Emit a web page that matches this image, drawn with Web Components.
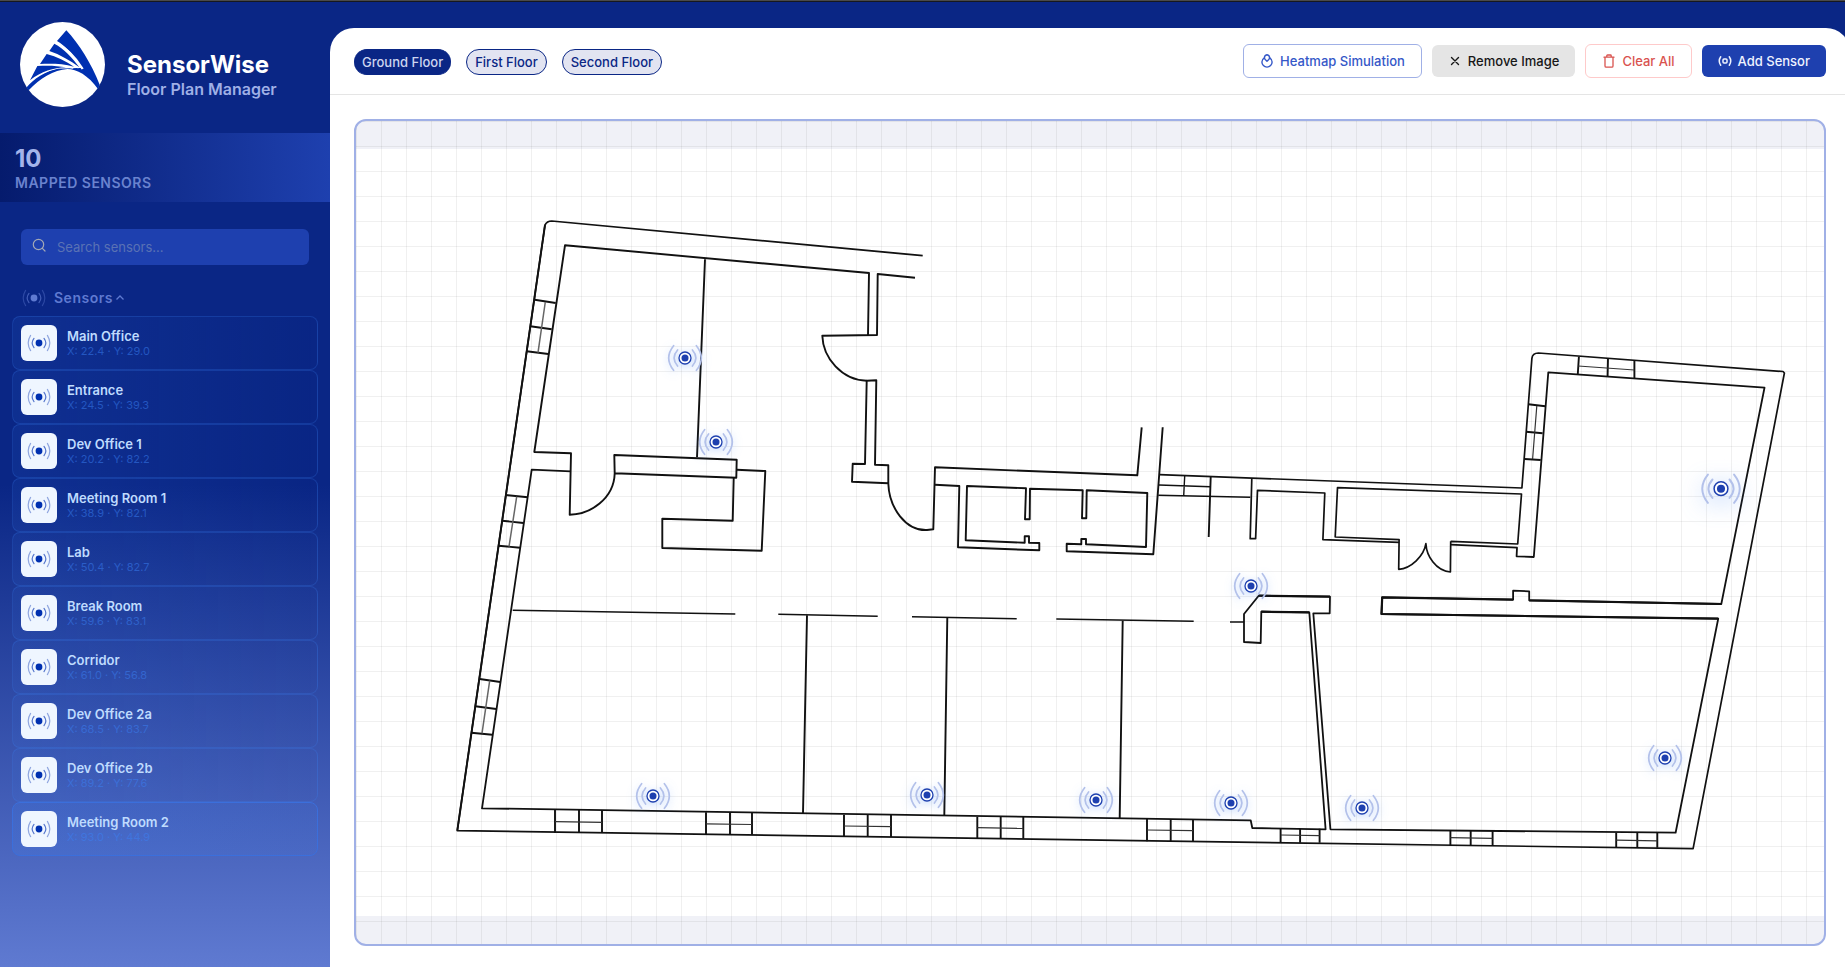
<!DOCTYPE html>
<html lang="en">
<head>
<meta charset="utf-8">
<meta name="viewport" content="width=device-width, initial-scale=1">
<title>SensorWise</title>
<style>
html, body { height: 100%; margin: 0; }
body { font-family: Inter, "Liberation Sans", sans-serif; background: #0a2685; overflow: hidden; }
</style>
</head>
<body>
<sw-app>
  <sw-sidebar slot="side">
    <sw-sensor name="Main Office" x="22.4" y="29.0"></sw-sensor>
    <sw-sensor name="Entrance" x="24.5" y="39.3"></sw-sensor>
    <sw-sensor name="Dev Office 1" x="20.2" y="82.2"></sw-sensor>
    <sw-sensor name="Meeting Room 1" x="38.9" y="82.1"></sw-sensor>
    <sw-sensor name="Lab" x="50.4" y="82.7"></sw-sensor>
    <sw-sensor name="Break Room" x="59.6" y="83.1"></sw-sensor>
    <sw-sensor name="Corridor" x="61.0" y="56.8"></sw-sensor>
    <sw-sensor name="Dev Office 2a" x="68.5" y="83.7"></sw-sensor>
    <sw-sensor name="Dev Office 2b" x="89.2" y="77.6"></sw-sensor>
    <sw-sensor name="Meeting Room 2" x="93.0" y="44.9" active></sw-sensor>
  </sw-sidebar>
  <sw-toolbar>
    <sw-pill slot="floors" active>Ground Floor</sw-pill>
    <sw-pill slot="floors">First Floor</sw-pill>
    <sw-pill slot="floors">Second Floor</sw-pill>
    <sw-button kind="outline">
      <svg slot="icon" width="14" height="14" viewBox="0 0 14 14" fill="none" stroke="currentColor" stroke-width="1.4" stroke-linecap="round" stroke-linejoin="round"><path d="M4.400 3.900C2.900 4.800 1.900 6.300 1.900 8A5.100 5.100 0 0 0 12.100 8C12.100 6.300 11.100 4.800 9.600 3.900"/><path d="M7 .8C5.500 1.200 4.400 2.200 4.400 3.800C4.400 5.400 5.700 6.200 7 7.200C8.300 6.200 9.600 5.400 9.600 3.800C9.600 2.200 8.500 1.200 7 .8Z"/></svg>
      Heatmap Simulation</sw-button>
    <sw-button kind="grey">
      <svg slot="icon" width="14" height="14" viewBox="0 0 14 14" fill="none" stroke="currentColor" stroke-width="1.4" stroke-linecap="round"><path d="M3.500 3.500L10.500 10.500M10.500 3.500L3.500 10.500"/></svg>
      Remove Image</sw-button>
    <sw-button kind="danger">
      <svg slot="icon" width="14" height="14" viewBox="0 0 14 14" fill="none" stroke="currentColor" stroke-width="1.3" stroke-linecap="round" stroke-linejoin="round"><path d="M2 3.200H12M4.800 3V1.700Q4.800 1 5.500 1H8.500Q9.200 1 9.200 1.700V3M3 3.400V12Q3 13.200 4.200 13.200H9.800Q11 13.200 11 12V3.400"/></svg>
      Clear All</sw-button>
    <sw-button kind="primary">
      <svg slot="icon" width="14" height="14" viewBox="0 0 14 14" fill="none" stroke="currentColor" stroke-width="1.500" stroke-linecap="round"><rect x="5" y="5" width="4" height="4" rx="1"/><path d="M2.700 2.800Q-.2 7 2.700 11.200M11.300 2.800Q14.200 7 11.300 11.200"/></svg>
      Add Sensor</sw-button>
  </sw-toolbar>
  <sw-floorplan>
    <sw-pin name="Main Office" x="22.4" y="29.0"></sw-pin>
    <sw-pin name="Entrance" x="24.5" y="39.3"></sw-pin>
    <sw-pin name="Dev Office 1" x="20.2" y="82.2"></sw-pin>
    <sw-pin name="Meeting Room 1" x="38.9" y="82.1"></sw-pin>
    <sw-pin name="Lab" x="50.4" y="82.7"></sw-pin>
    <sw-pin name="Break Room" x="59.6" y="83.1"></sw-pin>
    <sw-pin name="Corridor" x="61.0" y="56.8"></sw-pin>
    <sw-pin name="Dev Office 2a" x="68.5" y="83.7"></sw-pin>
    <sw-pin name="Dev Office 2b" x="89.2" y="77.6"></sw-pin>
    <sw-pin name="Meeting Room 2" x="93.0" y="44.9" active></sw-pin>
  </sw-floorplan>
</sw-app>

<script>
const signal = (dot) => `
  <svg width="24" height="24" viewBox="0 0 24 24" fill="none" stroke="${dot}" stroke-width="1.2" stroke-linecap="round" aria-hidden="true">
    <circle cx="12" cy="12" r="3.400" fill="${dot}" stroke="none"/>
    <path opacity=".65" d="M7 7.400Q3.300 12 7 16.600M17 7.400Q20.700 12 17 16.600"/>
    <path opacity=".4" d="M3.600 4.400Q-1.200 12 3.600 19.600M20.400 4.400Q25.200 12 20.400 19.600"/>
  </svg>`;

function define(name, render) {
  customElements.define(name, class extends HTMLElement {
    constructor() {
      super();
      this.attachShadow({ mode: "open" });
    }
    connectedCallback() {
      const t = document.createElement("template");
      t.innerHTML = render(this);
      this.shadowRoot.replaceChildren(t.content.cloneNode(true));
    }
  });
}

define("sw-app", () => `
  <style>
    :host { display: flex; flex-direction: column; height: 100vh; background: #0a2685; }
    .edge { height: 1px; flex: none; background: #4a4a4a; border-bottom: 1px solid #16181f; }
    .body { flex: 1; min-height: 0; display: grid; grid-template-columns: 330px minmax(0, 1fr); }
    main { margin: 26px -5px 0 0; background: #fff; border-radius: 24px 24px 0 0; display: flex; flex-direction: column; min-height: 0; }
  </style>
  <div class="edge"></div>
  <div class="body">
    <slot name="side"></slot>
    <main><slot></slot></main>
  </div>`);

define("sw-sidebar", () => `
  <style>
    :host { display: flex; flex-direction: column; min-height: 0; background: linear-gradient(180deg, #0a2685 50%, #5f7ad1 100%); }
    header { display: flex; align-items: center; gap: 22px; padding: 20px 20px 26px; }
    .brand { padding-top: 20px; }
    h1, p { margin: 0; }
    h1 { font-size: 24px; line-height: 28px; font-weight: 700; color: #fff; }
    .sub { font-size: 16px; line-height: 20px; font-weight: 600; color: #9fb0e6; }
    .stats { padding: 11px 15px 10px; background: linear-gradient(90deg, #051b6d, #1e40af); }
    .count { font-size: 24px; line-height: 29px; font-weight: 700; color: #a3b4ea; }
    .label { font-size: 14px; line-height: 19px; font-weight: 600; letter-spacing: 0.5px; color: #6a83cf; }
    .search { margin: 27px 21px 0; height: 36px; display: flex; align-items: center; gap: 11px; padding: 0 11px; box-sizing: border-box; background: #1e40af; border-radius: 6px; }
    .search svg { flex: none; margin-bottom: 4px; }
    input { flex: 1; min-width: 0; border: 0; padding: 0; background: none; outline: 0; font: 400 13px/20px Inter, sans-serif; color: #dbe4ff; }
    input::placeholder { color: #5a72b4; opacity: 1; }
    .group { margin: 21px 22px 6px; display: flex; align-items: center; border: 0; padding: 0; background: none; font: 600 14px/24px Inter, sans-serif; letter-spacing: 0.5px; color: #5f7ad1; }
    .group span { margin: 0 2px 0 8px; }
    .list { padding: 0 12px; }
  </style>
  <header>
    <svg width="85" height="85" viewBox="0 0 255 255" role="img" aria-label="SensorWise logo">
      <circle cx="127.500" cy="127.500" r="127.500" fill="#fff"/>
      <g fill="#0030b0">
        <path d="M139 25C177 65 214 125 239 188L234 201C205 160 170 141 142 141C101 144 60 168 26 205L19 197C40 170 76 149 108 140L172 138C190 140 185 133 178 129C160 95 133 70 111 57Z"/>
      </g>
      <g fill="none" stroke="#fff">
        <path d="M104 61C140 78 165 104 188 141" stroke-width="7"/>
        <path d="M80 88C120 100 148 115 176 137" stroke-width="6"/>
        <path d="M56 128C95 127 125 127 160 138" stroke-width="5"/>
        <path d="M28 178C55 155 84 144 113 138" stroke-width="4"/>
      </g>
      <g fill="#0030b0">
        <path d="M103 65C132 80 158 108 178 136C150 115 120 98 88 87Z"/>
        <path d="M80 96C110 104 138 118 162 134C130 125 95 125 60 126Z"/>
        <path d="M52 132C85 130 110 131 138 136C100 137 65 148 30 175Z"/>
      </g>
    </svg>
    <div class="brand"><h1>SensorWise</h1><p class="sub">Floor Plan Manager</p></div>
  </header>
  <section class="stats"><p class="count">10</p><p class="label">MAPPED SENSORS</p></section>
  <label class="search">
    <svg width="14" height="14" viewBox="0 0 14 14" fill="none" stroke="#a3a8b5" stroke-width="1.200" stroke-linecap="round" aria-hidden="true"><circle cx="6.500" cy="6.500" r="5.200"/><path d="M10.400 10.400L13 13"/></svg>
    <input type="search" placeholder="Search sensors..." aria-label="Search sensors">
  </label>
  <button class="group" type="button">${signal("#5f7ad1")}<span>Sensors</span>
    <svg width="10" height="10" viewBox="0 0 10 10" fill="none" stroke="currentColor" stroke-width="1.300" aria-hidden="true"><path d="M1.500 6.500L5 3L8.500 6.500"/></svg>
  </button>
  <div class="list"><slot></slot></div>`);

define("sw-sensor", (el) => `
  <style>
    :host { display: flex; align-items: center; gap: 10px; height: 54px; padding: 0 8px; box-sizing: border-box; border: 1px solid rgba(59, 130, 246, .22); border-radius: 8px; background: linear-gradient(90deg, rgba(59, 130, 246, .1), rgba(59, 130, 246, 0)); }
    :host([active]) { border-color: #3b6fdc; background: linear-gradient(90deg, rgba(59, 130, 246, .2), rgba(59, 130, 246, .08)); }
    .tile { width: 36px; height: 36px; display: grid; place-items: center; border-radius: 6px; background: #eff6ff; }
    .name { font-size: 13px; line-height: 16px; font-weight: 600; color: #bfdbfe; }
    .at { font-size: 11px; line-height: 15px; color: rgba(59, 130, 246, .5); }
  </style>
  <div class="tile">${signal("#0030b0")}</div>
  <div><div class="name">${el.getAttribute("name")}</div><div class="at">X: ${el.getAttribute("x")} · Y: ${el.getAttribute("y")}</div></div>`);

define("sw-toolbar", () => `
  <style>
    :host { display: flex; align-items: center; justify-content: space-between; height: 66px; padding: 0 24px; border-bottom: 1px solid #e5e5e5; flex: none; }
    .floors { display: flex; gap: 15px; padding-top: 2px; }
    .actions { display: flex; align-items: center; gap: 10px; }
  </style>
  <nav class="floors"><slot name="floors"></slot></nav>
  <div class="actions"><slot></slot></div>`);

define("sw-pill", () => `
  <style>
    :host { display: block; }
    button { display: block; height: 26px; padding: 0 8px; border: 1px solid #0a2685; border-radius: 13px; background: #e2e4f1; color: #0a2685; font: 500 13px/24px Inter, sans-serif; white-space: nowrap; }
    :host([active]) button { border-width: 1px 0; background: #0a2685; color: #cdd5ef; }
  </style>
  <button type="button"><slot></slot></button>`);

define("sw-button", () => `
  <style>
    :host { display: block; }
    button { display: flex; align-items: center; gap: 6px; padding: 0 16px; border: 0; border-radius: 6px; font: 500 13px/32px Inter, sans-serif; white-space: nowrap; }
    :host([kind=outline]) button { border: 1px solid #a0b0e6; background: #fff; color: #3558c8; }
    :host([kind=grey]) button { background: #e5e5e5; color: #171717; }
    :host([kind=danger]) button { border: 1px solid #fecaca; background: #fff; color: #d9534f; }
    :host([kind=primary]) button { background: #1e40af; color: #eff3ff; }
  </style>
  <button type="button"><slot name="icon"></slot><span><slot></slot></span></button>`);

define("sw-pin", (el) => `
  <style>
    :host { position: absolute; left: ${el.getAttribute("x")}%; top: ${el.getAttribute("y")}%; width: 40px; height: 44px; translate: -50% -50%; }
    :host([active]) { scale: 1.15; }
    svg { display: block; filter: drop-shadow(0 2px 5px rgba(59, 130, 246, .3)); overflow: visible; }
    :host([active]) svg { filter: drop-shadow(0 4px 10px rgba(59, 130, 246, .4)); }
  </style>
  <svg width="40" height="44" viewBox="0 0 40 44" fill="none" stroke="#1e40af" stroke-linecap="round" role="img" aria-label="${el.getAttribute("name")}">
    <circle cx="20" cy="20" r="6" fill="#fff" stroke-width="1.300"/>
    <circle cx="20" cy="20" r="3.500" fill="#1e40af" stroke="none"/>
    <g stroke="#b3c1ea" stroke-width="1.700"><path d="M12.600 12Q5.600 20 12.600 28M27.400 12Q34.400 20 27.400 28"/><path d="M8.600 7.700Q-1.200 20 8.600 32.300M31.400 7.700Q41.200 20 31.400 32.300"/></g>
  </svg>`);

const bottomWindows = [
  [555, 579, 602, 810, 833, 821.6], [706, 730, 752, 812.3, 834.7, 823.8], [844, 867.7, 891, 814.7, 837, 826],
  [977.3, 1000.7, 1023.3, 816.7, 838.700, 827.7], [1147, 1170.7, 1193, 819, 841.3, 830],
  [1280.6, 1300.1, 1319.6, 828.7, 842.7, 835], [1450.4, 1470.7, 1492.6, 830.7, 845.3, 837.7], [1616.2, 1637.3, 1657.3, 832.7, 847.7, 840.2]
];

define("sw-floorplan", () => `
  <style>
    :host { display: flex; flex: 1; min-height: 0; padding: 24px 24px 21px; }
    .canvas { position: relative; flex: 1; min-width: 0; border: 2px solid #a0b0e6; border-radius: 12px; overflow: hidden; background: #f0f1f7; display: flex; }
    .plan { flex: 1; width: 100%; height: 100%; display: block; }
    .grid { position: absolute; inset: 0; background: linear-gradient(rgba(0, 0, 0, .06) 1px, transparent 1px) 0 0 / 25px 25px, linear-gradient(90deg, rgba(0, 0, 0, .06) 1px, transparent 1px) 0 0 / 25px 25px; }
  </style>
  <div class="canvas">
    <svg class="plan" viewBox="356 149 1468 767" fill="none" stroke="#111" stroke-width="1.900" stroke-linejoin="round" role="img" aria-label="Ground floor plan">
      <rect x="356" y="149" width="1468" height="767" fill="#fff" stroke="none"/>
      <path d="M922.7 255.700L551.700 221Q547 221 545 225L457.300 830.700L1693.100 848.700L1784.400 373L1783 371.500L1538.400 353Q1532.500 353 1531.900 358.300L1521.900 488L1159.300 474.700" stroke-width="1.700"/>
      <path d="M545 225L457.300 830.700"/>
      <path d="M1162.700 427.300L1153.300 554.300L1066.700 551.300V543.700L1081.300 544.300V539H1086V544.300L1146 547L1147.300 493L1086.700 490.300L1086.300 518.300H1082L1082.700 490.300L1030 488.700L1029.700 519.300H1025L1026 488.300L967 486L965.700 540.300L1024.700 542.700V536.300H1029V542.700L1039.300 543V550.300L958 547.300L959.300 486L935 484.700"/>
      <path d="M1141.700 427.300L1137.300 475.300L935 467.300L933.300 529.300L927 530C906 531 889 508 888.300 483.300L852 481.700L852.700 463.700L865 464L866.700 380.700L876.300 380.300L875 464.700L888.300 465.300V483.300"/>
      <path d="M868 335L869 273L565 245.300L534.300 452L571 453.300L569.700 514.700C590 514.500 614 499 614.700 473.300L614.300 455L736.700 459.700L736.300 477.700L614.700 473.300"/>
      <path d="M866.700 380.700C842 380 823 358 822.300 335.700L877 335L877.700 274L915 277.700"/>
      <path d="M570.700 471.300L531.700 469.700L482 808.300L1250.700 820.300L1252.300 828L1325.600 829.300L1309.300 612.300L1261.300 611.700L1260.700 643L1244 642V614L1258.700 595.700L1330 596.700L1329.700 613.300H1313.300L1330.400 829.300L1675.600 832.700L1718.200 618.700L1381.500 614L1382.200 597.300L1513.100 599.700V590.700L1529.200 591.300V600.300L1721.300 604L1764.500 387.700L1548.300 372.300L1533.800 557L1516.600 556.300L1517 547.700L1450.700 544.700" stroke-width="1.800"/>
      <path d="M1258.700 595.700L1330 596.700M1261.300 611.700L1309.300 612.300M1718.200 618.700L1381.500 614L1382.200 597.300L1513.100 599.700M1529.200 600.300L1721.300 604" stroke-width="2.200"/>
      <path d="M705 259.300L697 457.300M736.700 469.700L765.300 471L761.700 550.700L662.300 548V518.700L732.700 520.700L733.700 477.700"/>
      <path d="M1450.700 541.300L1517.700 544L1521.500 494L1337.500 487.700L1335.200 537L1399.100 539.700L1398.700 569.300C1411 568.500 1424 556 1425.900 543.700C1426.500 556 1436 571 1450.400 572L1450.700 541.300" stroke-width="1.700"/>
      <path d="M1399.100 542.300L1322.900 539.700L1324.800 493L1257.500 490.300L1255.600 538.700H1250.200L1251.800 478.300" stroke-width="1.700"/>
      <path d="M1159 485L1210.300 486.700M1158.300 495.300L1250.300 497.300M1184.700 476L1183.700 495.700" stroke-width="1.400"/>
      <path d="M1210.700 477L1208.700 537M807 615.300L803 813.300M947.300 617.700L944.300 815.300M1122.700 620.700L1119.700 818"/>
      <path stroke-width="1.500" d="M512.700 610.300L735.300 614M778.300 614.300L877.700 616.300M912 616.700L1016.700 618.700M1056.300 619L1193.700 621.300M1230 622H1244"/>
      <path d="M534.700 299.700L555.700 303M530.300 326.300L551.700 329.300M526.700 351.300L548.300 354M506 495L527.700 497.300M502 520.700L523.300 523M498.300 545.700L520 547.700M479.700 679L500.300 682M475.300 706.300L496.300 709M471.300 732.700L492.300 734.700M1578.900 356.700L1577.800 374M1608 358.300L1607.600 376M1634.400 360.300V378M1528.400 404.300L1545.300 406.300M1526.100 431.700L1542.600 433.300M1524.600 459L1540.700 460"/>
      <path stroke="#666" stroke-width="1.500" d="M545.300 302L538 352.700M516.700 496.700L509 546.700M489.700 680.700L482 733.300"/>
      <path stroke="#333" stroke-width="1.200" d="M1578.200 366L1634.400 370M1536.800 406L1532.600 459"/>
      ${bottomWindows.map(([a, b, c, t, u, m]) => `<path d="M${a} ${t}V${u}M${b} ${t}V${u}M${c} ${t}V${u}"/><path stroke-width="1.200" stroke="#333" d="M${a} ${m}L${c} ${m + .7}"/>`).join("")}
    </svg>
    <div class="grid"></div>
    <slot></slot>
  </div>`);
</script>
</body>
</html>
